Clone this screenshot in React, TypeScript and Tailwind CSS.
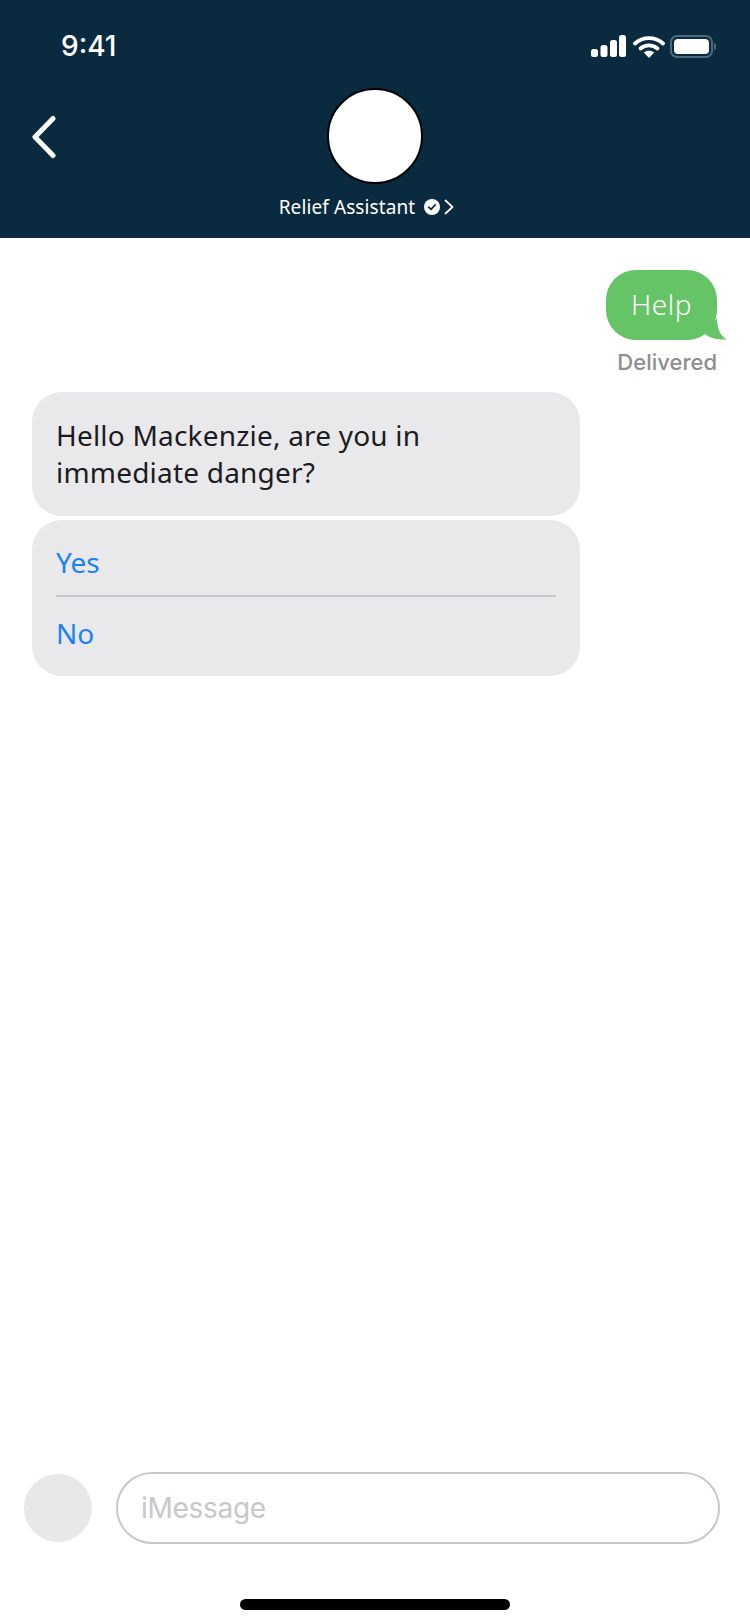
/**
 * Relief Assistant chat — iMessage style conversation screen.
 */
const BODY_FONT = "font-['Noto_Sans',_'Roboto',_sans-serif]";

function StatusIcons() {
  return (
    <div className="flex items-center">
      {/* signal */}
      <svg width="35" height="22" viewBox="0 0 35 22" fill="white" aria-hidden>
        <rect x="0" y="14" width="7" height="8" rx="2.5" />
        <rect x="9.5" y="10" width="7" height="12" rx="2.5" />
        <rect x="19" y="5" width="7" height="17" rx="2.5" />
        <rect x="28" y="0" width="7" height="22" rx="2.5" />
      </svg>
      {/* wifi */}
      <svg className="ml-[7px]" width="32" height="23" viewBox="0 0 32 23" fill="none" aria-hidden>
        <path d="M2 8.5C9.8 1.2 22.2 1.2 30 8.5" stroke="white" strokeWidth="3.8" strokeLinecap="round" />
        <path d="M7.5 13.5C12.2 9.2 19.8 9.2 24.5 13.5" stroke="white" strokeWidth="3.8" strokeLinecap="round" />
        <path d="M16 23L10.8 17.6C13.6 15.1 18.4 15.1 21.2 17.6Z" fill="white" />
      </svg>
      {/* battery */}
      <div className="ml-[5px] flex items-center">
        <div className="flex h-[23px] w-[43px] rounded-[7px] border-2 border-[#51687a] p-[2px]">
          <div className="h-full w-full rounded-[4px] bg-white" />
        </div>
        <div className="ml-[1px] h-[7px] w-[2px] rounded-r-sm bg-[#51687a]" />
      </div>
    </div>
  );
}

function Header() {
  return (
    <header className="relative flex h-[238px] shrink-0 flex-col bg-[#0a2a40] text-white">
      <div className="flex items-center justify-between pl-[61px] pr-[34px] pt-[30px]">
        <span className="font-['Inter',_sans-serif] text-[28px] font-medium leading-[32px]">9:41</span>
        <StatusIcons />
      </div>
      <svg
        className="absolute left-[30px] top-[115px]"
        width="28"
        height="44"
        viewBox="0 0 28 44"
        fill="none"
        aria-hidden
      >
        <path d="M23 3.5L5 22L23 40.5" stroke="white" strokeWidth="5" strokeLinecap="round" strokeLinejoin="round" />
      </svg>
      <div className="mt-[26px] flex flex-col items-center">
        <div className="h-[96px] w-[96px] rounded-full border-2 border-black bg-white" />
        <div className={`mt-[11px] flex items-center pr-[17px] text-[19px] leading-[24px] tracking-[0.1px] ${BODY_FONT}`}>
          <span>Relief Assistant</span>
          <svg className="ml-[9px]" width="16" height="16" viewBox="0 0 16 16" aria-hidden>
            <circle cx="8" cy="8" r="8" fill="white" />
            <path d="M4.8 8.2L7 10.3L11.2 5.9" fill="none" stroke="#0a2a40" strokeWidth="1.7" strokeLinecap="round" strokeLinejoin="round" />
          </svg>
          <svg className="ml-[4px]" width="10" height="16" viewBox="0 0 10 16" fill="none" aria-hidden>
            <path d="M1.5 1.5L8.5 8L1.5 14.5" stroke="white" strokeWidth="1.8" strokeLinecap="round" strokeLinejoin="round" />
          </svg>
        </div>
      </div>
    </header>
  );
}

function SentBubble() {
  return (
    <div className="relative h-[70px] w-[111px] rounded-[30px] bg-[#65c466]">
      <svg className="absolute bottom-0 right-[-10px]" width="30" height="24" viewBox="0 0 30 24" aria-hidden>
        <path d="M20 2C20 12 23 20 30 23.5C24 24 14 23 8 18Z" fill="#65c466" />
      </svg>
      <span className={`relative flex h-full items-center justify-center pb-[2px] text-[28px] font-light tracking-[0.5px] text-white ${BODY_FONT}`}>
        Help
      </span>
    </div>
  );
}

function Messages() {
  return (
    <main className={`flex flex-1 flex-col pl-[32px] pr-[33px] pt-[32px] ${BODY_FONT}`}>
      <div className="self-end">
        <SentBubble />
      </div>
      <p className="mt-[7px] self-end font-['Inter',_sans-serif] text-[22px] font-medium leading-[30px] text-[#8e8e8e]">
        Delivered
      </p>
      <div className="mt-[15px] w-[548px] rounded-[30px] bg-[#e9e9eb] pb-[25px] pl-[24px] pr-[25px] pt-[25px] text-[28px] leading-[37px] tracking-[0.2px] text-[#1c1c1e]">
        Hello Mackenzie, are you in
        <br />
        immediate danger?
      </div>
      <div className="mt-[4px] w-[548px] rounded-[30px] bg-[#e9e9eb] px-[24px] text-[28px] text-[#1a82fb]">
        <div className="flex h-[77px] items-center border-b-2 border-[#c8c8cc] pt-[8px]">Yes</div>
        <div className="flex h-[79px] items-center pb-[8px]">No</div>
      </div>
    </main>
  );
}

function Composer() {
  return (
    <footer className="flex shrink-0 items-center pl-[24px] pr-[30px]">
      <div className="h-[68px] w-[68px] rounded-full bg-[#e7e8ea]" />
      <div className="ml-[24px] flex h-[72px] flex-1 items-center rounded-[36px] border-2 border-[#c8c8cc] pl-[23px] font-['Inter',_sans-serif] text-[28px] tracking-[-0.3px] text-[#c7c7cc]">
        iMessage
      </div>
    </footer>
  );
}

export default function App() {
  return (
    <div className="flex h-[1624px] w-[750px] flex-col overflow-hidden bg-white">
      <Header />
      <Messages />
      <Composer />
      <div className="flex h-[80px] shrink-0 justify-center pt-[55px]">
        <div className="h-[11px] w-[270px] rounded-full bg-black" />
      </div>
    </div>
  );
}
